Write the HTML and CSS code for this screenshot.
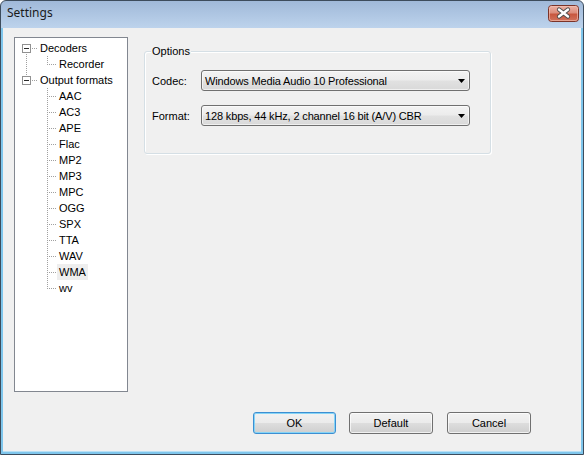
FILE: index.html
```html
<!DOCTYPE html>
<html>
<head>
<meta charset="utf-8">
<title>Settings</title>
<link rel="stylesheet" href="styles.css">
</head>
<body>
<svg class="defs" aria-hidden="true">
  <symbol id="root-first">
    <path class="dot" d="M17 8.5H24M11.5 14V16"/>
    <rect class="box" x="7.5" y="4.5" width="8" height="8"/>
    <path class="minus" d="M9 8.5H14"/>
  </symbol>
  <symbol id="root-last">
    <path class="dot" d="M17 8.5H24M11.5 0V4"/>
    <rect class="box" x="7.5" y="4.5" width="8" height="8"/>
    <path class="minus" d="M9 8.5H14"/>
  </symbol>
  <symbol id="child-last-cont">
    <path class="dot" d="M11.5 0V16M32.5 0V9M34 8.5H42"/>
  </symbol>
  <symbol id="child-mid">
    <path class="dot" d="M32.5 0V16M34 8.5H42"/>
  </symbol>
  <symbol id="child-last">
    <path class="dot" d="M32.5 0V9M34 8.5H42"/>
  </symbol>
</svg>

<div class="window">
  <div class="titlebar">
    <span class="title">Settings</span>
    <div class="close">
      <svg width="31" height="17" viewBox="0 0 31 17">
        <defs>
          <linearGradient id="cg" x1="0" y1="0" x2="0" y2="1">
            <stop offset="0" stop-color="#eeb3a6"/>
            <stop offset="0.45" stop-color="#dc8d7c"/>
            <stop offset="0.55" stop-color="#c8573f"/>
            <stop offset="1" stop-color="#d2745e"/>
          </linearGradient>
        </defs>
        <rect x="0.5" y="0.5" width="30" height="16" rx="3" fill="url(#cg)" stroke="#7b3328"/>
        <rect x="1.5" y="1.5" width="28" height="14" rx="2" fill="none" stroke="#f3c4b8" stroke-opacity="0.6"/>
        <path d="M11 4.5L20 11.5M20 4.5L11 11.5" stroke="#4b4b4b" stroke-width="4.2" stroke-linecap="round"/>
        <path d="M11 4.5L20 11.5M20 4.5L11 11.5" stroke="#ffffff" stroke-width="2.4" stroke-linecap="round"/>
      </svg>
    </div>
  </div>
  <div class="client">
    <div class="main">
      <div class="tree">
        <div class="row"><svg class="g-root"><use href="#root-first"/></svg><span class="label">Decoders</span></div>
        <div class="row"><svg class="g-child"><use href="#child-last-cont"/></svg><span class="label">Recorder</span></div>
        <div class="row"><svg class="g-root"><use href="#root-last"/></svg><span class="label">Output formats</span></div>
        <div class="row"><svg class="g-child"><use href="#child-mid"/></svg><span class="label">AAC</span></div>
        <div class="row"><svg class="g-child"><use href="#child-mid"/></svg><span class="label">AC3</span></div>
        <div class="row"><svg class="g-child"><use href="#child-mid"/></svg><span class="label">APE</span></div>
        <div class="row"><svg class="g-child"><use href="#child-mid"/></svg><span class="label">Flac</span></div>
        <div class="row"><svg class="g-child"><use href="#child-mid"/></svg><span class="label">MP2</span></div>
        <div class="row"><svg class="g-child"><use href="#child-mid"/></svg><span class="label">MP3</span></div>
        <div class="row"><svg class="g-child"><use href="#child-mid"/></svg><span class="label">MPC</span></div>
        <div class="row"><svg class="g-child"><use href="#child-mid"/></svg><span class="label">OGG</span></div>
        <div class="row"><svg class="g-child"><use href="#child-mid"/></svg><span class="label">SPX</span></div>
        <div class="row"><svg class="g-child"><use href="#child-mid"/></svg><span class="label">TTA</span></div>
        <div class="row"><svg class="g-child"><use href="#child-mid"/></svg><span class="label">WAV</span></div>
        <div class="row"><svg class="g-child"><use href="#child-mid"/></svg><span class="label selected">WMA</span></div>
        <div class="row"><svg class="g-child"><use href="#child-last"/></svg><span class="label">wv</span></div>
      </div>
      <div class="group">
        <span class="group-title">Options</span>
        <div class="field">
          <span class="field-label">Codec:</span>
          <div class="combo"><span class="combo-text">Windows Media Audio 10 Professional</span><svg class="arrow" width="7" height="4" viewBox="0 0 7 4"><path d="M0 0H7L3.5 4Z"/></svg></div>
        </div>
        <div class="field">
          <span class="field-label">Format:</span>
          <div class="combo"><span class="combo-text">128 kbps, 44 kHz, 2 channel 16 bit (A/V) CBR</span><svg class="arrow" width="7" height="4" viewBox="0 0 7 4"><path d="M0 0H7L3.5 4Z"/></svg></div>
        </div>
      </div>
    </div>
    <div class="buttons">
      <div class="btn btn-default">OK</div>
      <div class="btn btn-middle">Default</div>
      <div class="btn">Cancel</div>
    </div>
  </div>
</div>
</body>
</html>
```

FILE: styles.css
```css
html, body {
  margin: 0;
  padding: 0;
  background: #ffffff;
}

body {
  font-family: "Liberation Sans", Arial, sans-serif;
  font-size: 11px;
  color: #000;
}

.defs {
  display: block;
  width: 0;
  height: 0;
  overflow: hidden;
}

.window {
  width: 584px;
  height: 455px;
  box-sizing: border-box;
  border: 1px solid #3d4c5c;
  border-radius: 6px 6px 0 0;
  padding: 0 2px 2px 2px;
  background: linear-gradient(to bottom, #a0b9d9 0px, #bdd3ec 27px, #7fc6ec 27px, #7fc6ec 100%);
  display: flex;
  flex-direction: column;
}

.titlebar {
  height: 27px;
  display: flex;
  align-items: flex-start;
}

.title {
  font-family: "Noto Sans", "Open Sans", sans-serif;
  font-size: 12px;
  line-height: 16px;
  margin-top: 4px;
  margin-left: 4px;
  color: #1a1a1a;
}

.close {
  margin-left: auto;
  margin-right: 2px;
  margin-top: 4px;
  width: 31px;
  height: 17px;
}

.close svg {
  display: block;
}

.client {
  flex: 1;
  background: #f0f0f0;
  box-shadow: inset 0 -1px 0 #b9e0f5;
  padding: 9px 0 0 11px;
  display: flex;
  flex-direction: column;
}

.main {
  display: flex;
  align-items: flex-start;
  gap: 16px;
}

.tree {
  width: 114px;
  height: 355px;
  box-sizing: border-box;
  border: 1px solid #828790;
  background: #ffffff;
  padding-top: 2px;
}

.row {
  height: 16px;
  display: flex;
  align-items: center;
}

.row svg {
  display: block;
  height: 16px;
  flex: none;
  shape-rendering: crispEdges;
}

.g-root {
  width: 23px;
}

.g-child {
  width: 42px;
}

.dot {
  fill: none;
  stroke: #a0a0a0;
  stroke-width: 1;
  stroke-dasharray: 1 1;
}

.box {
  fill: #ffffff;
  stroke: #919191;
}

.minus {
  stroke: #2b2b2b;
  stroke-width: 1;
}

.label {
  line-height: 16px;
  padding: 0 2px;
  white-space: nowrap;
  color: #000;
}

.label.selected {
  background: #eeeeee;
}

.group {
  position: relative;
  margin-top: 14px;
  width: 347px;
  box-sizing: border-box;
  border: 1px solid #d5dfe5;
  border-radius: 3px;
  box-shadow: inset 1px 1px 0 #ffffff, 1px 1px 0 #ffffff;
  padding: 18px 0 27px 7px;
  display: flex;
  flex-direction: column;
  gap: 14px;
}

.group-title {
  position: absolute;
  top: -7px;
  left: 6px;
  padding: 0 1px;
  line-height: 13px;
  background: #f0f0f0;
}

.field {
  display: flex;
  align-items: center;
}

.field-label {
  width: 49px;
  flex: none;
}

.combo {
  width: 269px;
  height: 21px;
  box-sizing: border-box;
  border: 1px solid #707070;
  border-radius: 3px;
  background: linear-gradient(to bottom, #f3f3f3 0%, #ececec 48%, #e1e1e1 52%, #d9d9d9 100%);
  box-shadow: inset 0 0 0 1px rgba(255, 255, 255, 0.6);
  padding: 0 4px 0 3px;
  display: flex;
  align-items: center;
  justify-content: space-between;
}

.combo-text {
  white-space: nowrap;
  letter-spacing: -0.15px;
}

.arrow {
  display: block;
  fill: #000;
}

.buttons {
  margin-top: 20px;
  display: flex;
  justify-content: flex-end;
  gap: 14px;
  padding-right: 50px;
}

.btn {
  width: 84px;
  height: 22px;
  box-sizing: border-box;
  border: 1px solid #707070;
  border-radius: 3px;
  background: linear-gradient(to bottom, #f2f2f2 0%, #ebebeb 48%, #dddddd 52%, #cfcfcf 100%);
  box-shadow: inset 0 0 0 1px rgba(255, 255, 255, 0.7);
  display: flex;
  align-items: center;
  justify-content: center;
  color: #000;
}

.btn-default {
  width: 83px;
  border-color: #3c8fd2;
  box-shadow: inset 0 0 0 1px #86d4f6;
}

.btn-middle {
  margin-left: -1px;
}
```
